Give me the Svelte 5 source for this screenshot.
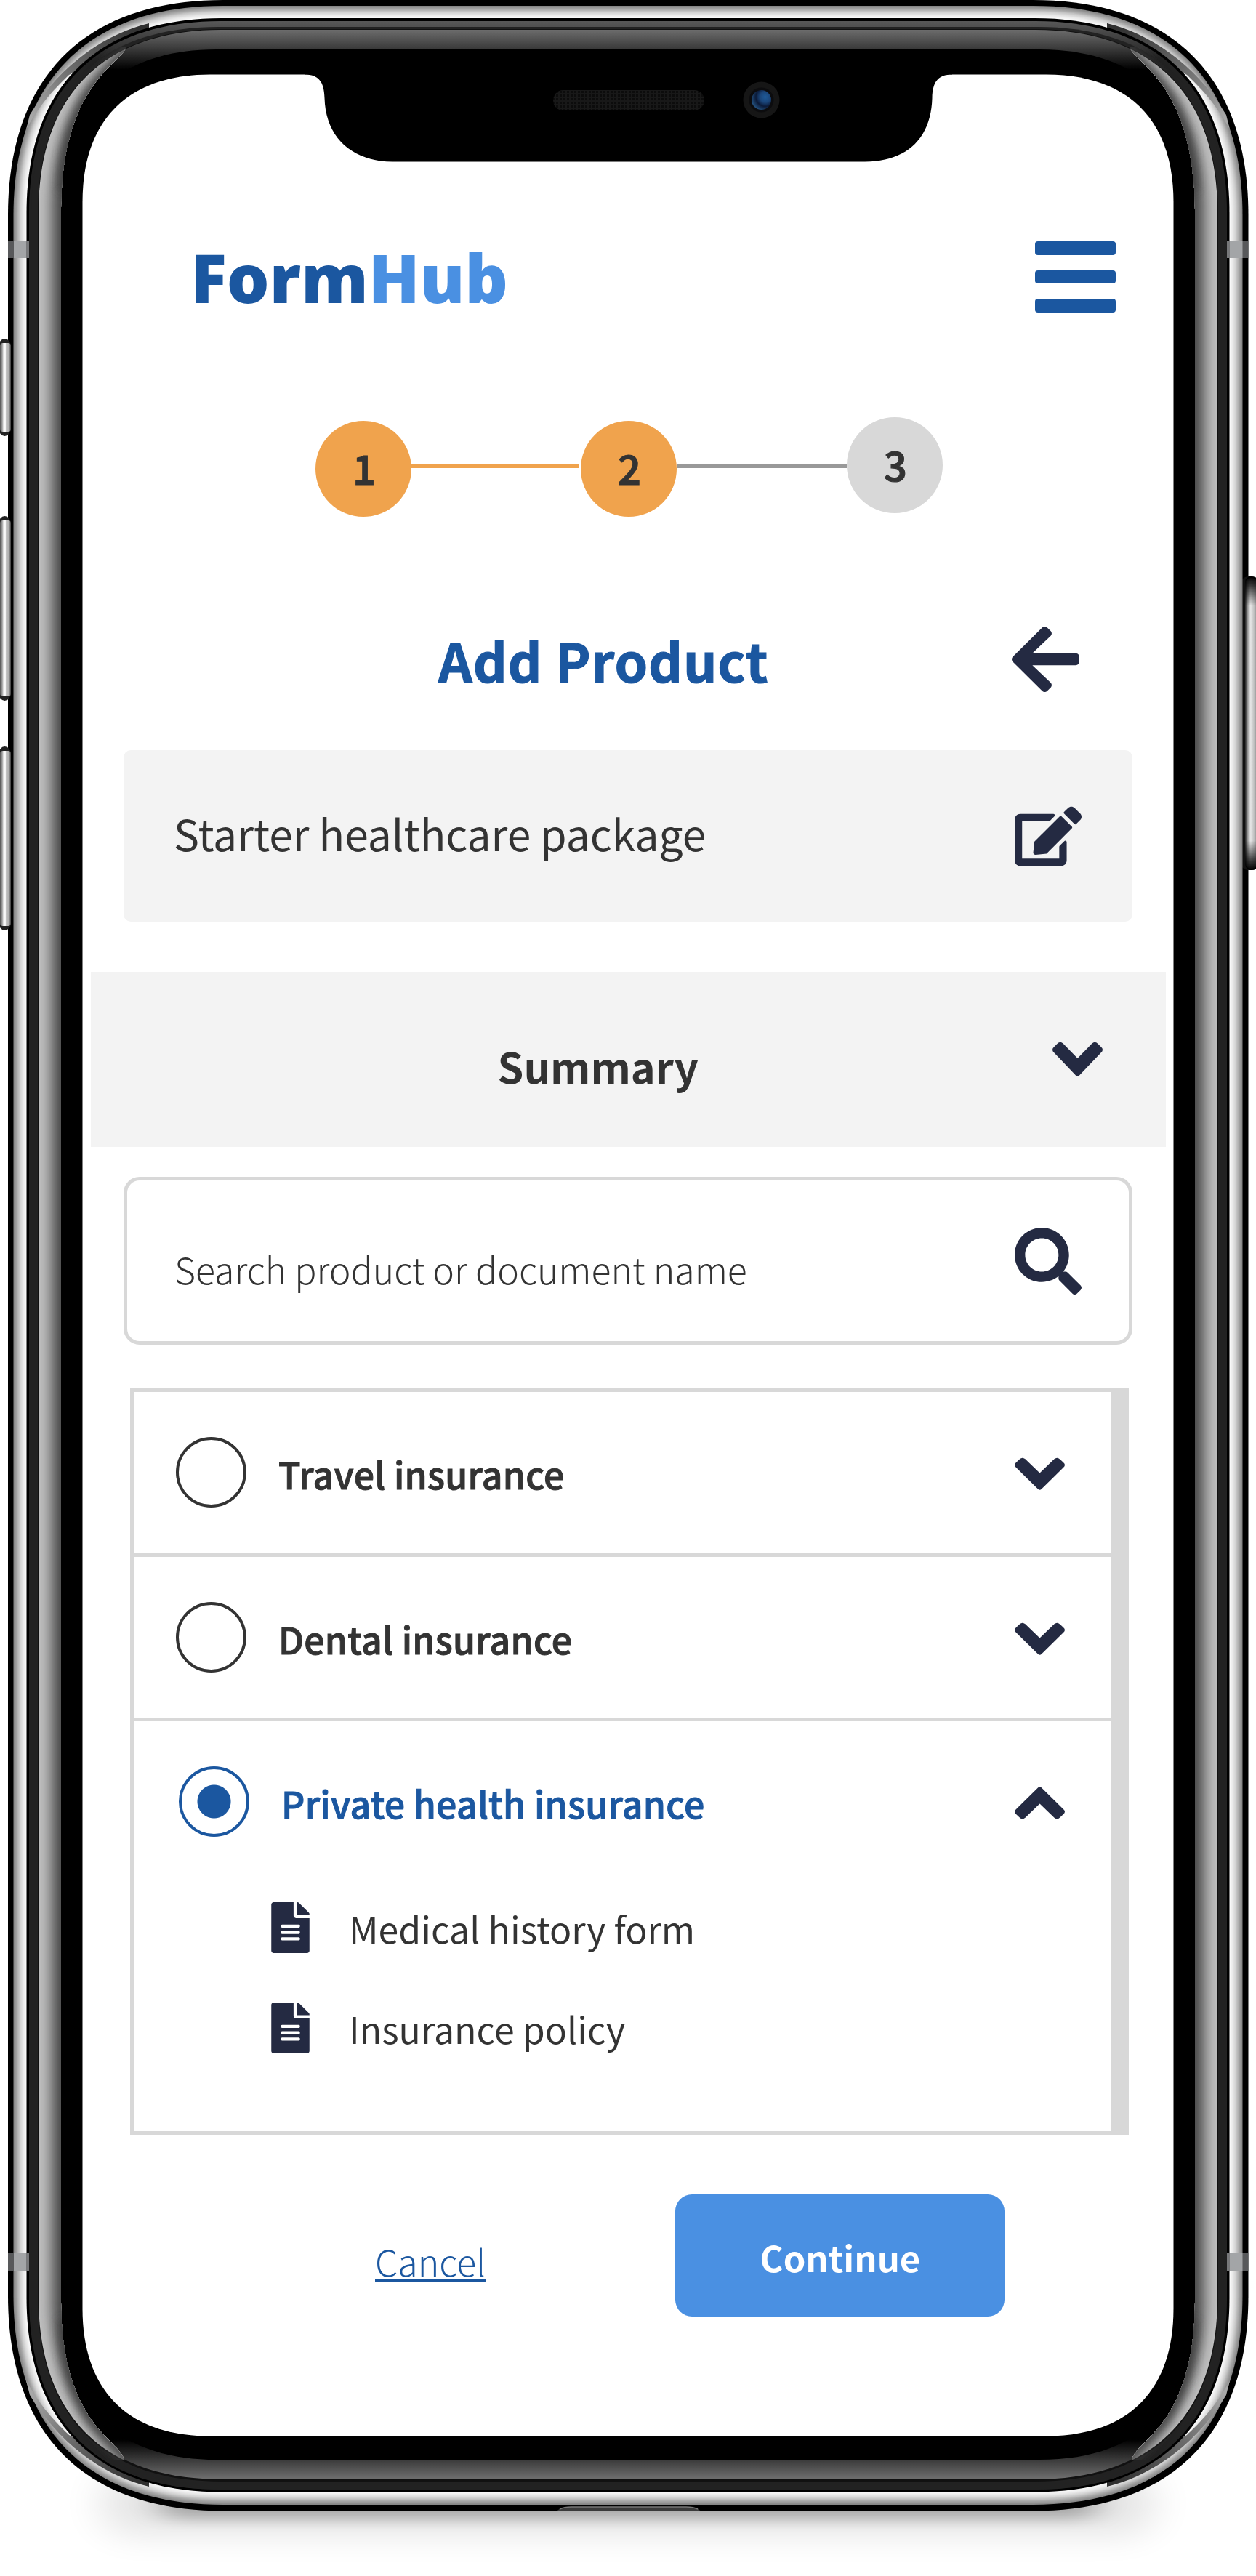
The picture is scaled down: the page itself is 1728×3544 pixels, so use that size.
<script>
  // Builds a continuous-corner rounded rectangle for the device shell.
  function shell(l, t, r, b, R) {
    const e = R * 1.13;
    const k = R * 0.404;
    return `M${l},${t + e} C${l},${t + k} ${l + k},${t} ${l + e},${t} H${r - e} C${r - k},${t} ${r},${t + k} ${r},${t + e} V${b - e} C${r},${b - k} ${r - k},${b} ${r - e},${b} H${l + e} C${l + k},${b} ${l},${b - k} ${l},${b - e} Z`;
  }
  const mix = (stops, p) => {
    const s = p * (stops.length - 1);
    const i = Math.min(Math.floor(s), stops.length - 2);
    const v = Math.round(stops[i] + (stops[i + 1] - stops[i]) * (s - i));
    return `rgb(${v},${v},${v})`;
  };
  const rim = Array.from({ length: 18 }, (_, i) => ({
    d: shell(18.5 + i, 8 + i * 0.95, 1709.5 - i, 3446 - i, 255 - i),
    c: mix([134, 165, 205, 232, 250], i / 17)
  }));
  const glow = Array.from({ length: 30 }, (_, i) => ({
    d: shell(53 + i, 41 + i, 1675 - i, 3412 - i, 222 - i),
    c: mix([190, 178, 150, 112, 82], i / 29)
  }));
  // Corner reflections are drawn once and mirrored into the four corners.
  const corners = [
    'matrix(1 0 0 1 0 0)',
    'matrix(-1 0 0 1 1728 0)',
    'matrix(1 0 0 -1 0 3453)',
    'matrix(-1 0 0 -1 1728 3453)'
  ];

  const steps = [
    { n: 1, state: 'done' },
    { n: 2, state: 'done' },
    { n: 3, state: 'todo' }
  ];
  const products = [
    { name: 'Travel insurance', docs: [] },
    { name: 'Dental insurance', docs: [] },
    { name: 'Private health insurance', docs: ['Medical history form', 'Insurance policy'] }
  ];
  let selected = 'Private health insurance';
</script>

{#snippet chevron(up)}
  <svg class="chevron" class:up viewBox="0 0 69 48" preserveAspectRatio="none"><path d="M6 3.500 Q10 -1.500 14.500 2.500 L34.500 23 L54.500 2.500 Q59 -1.500 63 3.500 L67 7.500 Q71 11 67 15 L37 46.500 Q34.500 49 32 46.500 L2 15 Q-2 11 2 7.500 Z" /></svg>
{/snippet}

<div class="phone">
  <svg class="device" viewBox="0 0 1728 3544" aria-hidden="true">
    <defs>
      <linearGradient id="edge" gradientUnits="userSpaceOnUse" x1="0" y1="29" x2="0" y2="80">
        <stop offset="0" stop-color="#585858" /><stop offset="1" stop-color="#222" />
      </linearGradient>
      <linearGradient id="glass" gradientUnits="userSpaceOnUse" x1="0" y1="41" x2="0" y2="3411">
        <stop offset="0" stop-color="#6c6c6c" /><stop offset=".008" stop-color="#383838" /><stop offset=".0162" stop-color="#000" />
        <stop offset=".9838" stop-color="#000" /><stop offset=".992" stop-color="#3a3a3a" /><stop offset="1" stop-color="#707070" />
      </linearGradient>
      <linearGradient id="button" x1="0" x2="1">
        <stop offset="0" stop-color="#555" /><stop offset=".2" stop-color="#999" /><stop offset=".35" stop-color="#fff" /><stop offset=".5" stop-color="#f4f4f4" /><stop offset=".56" stop-color="#c4c4c4" /><stop offset=".85" stop-color="#aaa" /><stop offset="1" stop-color="#333" />
      </linearGradient>
      <linearGradient id="power" x1="0" x2="1">
        <stop offset="0" stop-color="#222" /><stop offset=".25" stop-color="#aaa" /><stop offset=".45" stop-color="#e6e6e6" /><stop offset=".7" stop-color="#c4c4c4" /><stop offset="1" stop-color="#888" />
      </linearGradient>
      <linearGradient id="powerEnds" x1="0" x2="0" y1="0" y2="1">
        <stop offset="0" stop-color="#000" /><stop offset=".03" stop-color="#000" stop-opacity=".75" /><stop offset=".1" stop-color="#000" stop-opacity="0" /><stop offset=".9" stop-color="#000" stop-opacity="0" /><stop offset=".97" stop-color="#000" stop-opacity=".75" /><stop offset="1" stop-color="#000" />
      </linearGradient>
      <linearGradient id="streak" gradientUnits="userSpaceOnUse" x1="42" y1="160" x2="190" y2="38">
        <stop offset="0" stop-color="#a8a8a8" /><stop offset=".45" stop-color="#6a6a6a" /><stop offset="1" stop-color="#303030" />
      </linearGradient>
      <radialGradient id="lens" cx=".7" cy=".35" r=".8">
        <stop offset="0" stop-color="#1f5a98" /><stop offset=".35" stop-color="#1a4478" /><stop offset=".6" stop-color="#0b1a38" /><stop offset="1" stop-color="#2a5f90" />
      </radialGradient>
      <pattern id="mesh" width="5" height="5" patternUnits="userSpaceOnUse">
        <rect width="5" height="5" fill="#181818" /><rect width="3" height="3" fill="#0c0c0c" />
      </pattern>
      <clipPath id="sides">
        <path d="M174,64 C172,84 84,112 84,290 V3165 C84,3338 168,3358 171,3385 L40,3385 V64 Z M1554,64 C1556,84 1644,112 1644,290 V3165 C1644,3338 1560,3358 1557,3385 L1690,3385 V64 Z" />
      </clipPath>
      <filter id="shade" x="-50%" y="-50%" width="200%" height="200%"><feGaussianBlur stdDeviation="7" /></filter>
      <filter id="soft" x="-20%" y="-200%" width="140%" height="500%"><feGaussianBlur stdDeviation="28 22" /></filter>
      <filter id="tight" x="-20%" y="-200%" width="140%" height="500%"><feGaussianBlur stdDeviation="22 9" /></filter>
    </defs>

    <rect x="140" y="3400" width="1448" height="88" rx="40" fill="#000" opacity=".1" filter="url(#soft)" />
    <rect x="220" y="3430" width="1288" height="36" rx="18" fill="#000" opacity=".26" filter="url(#tight)" />

    <path d={shell(11, 0, 1717.5, 3454.5, 262)} fill="#000" />
    {#each [[466, 134], [710, 254], [1027, 253]] as [y, h]}
      <rect x="-2" {y} width="17" height={h} rx="11" fill="#222" />
      <rect x="0" y={y + 6} width="15" height={h - 12} rx="4" fill="url(#button)" />
    {/each}
    <rect x="1706" y="793" width="28" height="404" rx="12" fill="#111" />
    <rect x="1713" y="795" width="17" height="400" rx="8" fill="url(#power)" />
    <rect x="1713" y="793" width="17" height="404" rx="8" fill="url(#powerEnds)" />

    {#each rim as r}<path d={r.d} fill={r.c} />{/each}
    {#each corners as m}
      <path transform={m} d="M205,32 C150,45 85,85 41,158 L36,178 C60,135 80,118 95,103 L205,44 Z" fill="url(#streak)" />
    {/each}
    <path d={shell(36.500, 25, 1691.500, 3428.500, 237)} fill="#000" />
    <path d={shell(40, 29, 1688, 3425, 233)} fill="url(#edge)" />
    <path d={shell(43, 37, 1685, 3425, 228)} fill="#222" />
    <path d={shell(52, 40, 1676, 3414, 223)} fill="#111" />
    <path d={shell(53, 41, 1675, 3411, 222)} fill="url(#glass)" />
    <path d={shell(83, 68, 1645, 3384, 190)} fill="#000" />
    <g clip-path="url(#sides)">
      {#each glow as g}<path d={g.d} fill={g.c} />{/each}
      <path d={shell(83, 71, 1645, 3382, 192)} fill="#525252" />
      {#each corners as m}
        <path transform={m} d="M182,60 C176,88 92,115 92,262" fill="none" stroke="#404040" stroke-width="22" opacity=".9" filter="url(#shade)" />
      {/each}
    </g>
    {#each [[331, 24], [3100, 24]] as [y, h]}
      <rect x="11" {y} width="29" height={h} fill="#a3a5a7" />
      <rect x="11" {y} width="8" height={h} fill="#58595b" />
      <rect x="36" {y} width="4" height={h} fill="#77787a" />
      <rect x="1688" {y} width="29.500" height={h} fill="#a3a5a7" />
      <rect x="1709.500" {y} width="8" height={h} fill="#58595b" />
      <rect x="1688" {y} width="4" height={h} fill="#77787a" />
    {/each}
    <path d="M766,3454.500 Q772,3449 786,3449 H944 Q958,3449 964,3454.500 Z" fill="#3a3a3a" />
    <path d="M770,3452 Q776,3449 786,3449 H944 Q954,3449 960,3452" fill="none" stroke="#777" stroke-width="1.500" />

    <path d={shell(113.500, 102.500, 1614.500, 3351.500, 155)} fill="#fff" />
    <path d="M419,101 V102.500 C438,102.500 446,112 446.500,135 C448,190 485,222 540,222.500 H1190 C1248,222 1281,190 1282.500,135 C1283,112 1291,102.500 1310,102.500 V101 Z" fill="#000" />
    <rect x="761" y="124" width="208" height="28" rx="14" fill="url(#mesh)" />
    <circle cx="1047.500" cy="137.500" r="25" fill="#161616" />
    <circle cx="1047.500" cy="137.500" r="17" fill="#0c0c0e" />
    <circle cx="1047.500" cy="137.500" r="13.500" fill="url(#lens)" />
  </svg>

  <main class="screen">
    <header>
      <div class="logo">Form<span>Hub</span></div>
      <div class="menu"><i></i><i></i><i></i></div>
    </header>

    <div class="steps">
      {#each steps as s, i}
        {#if i}<div class="line" class:active={i === 1}></div>{/if}
        <div class="step {s.state}">{s.n}</div>
      {/each}
    </div>

    <div class="title">
      <h1>Add Product</h1>
      <svg class="back" viewBox="0 38 448 436" preserveAspectRatio="none"><path d="M257.500 445.100l-22.200 22.200c-9.400 9.400-24.600 9.400-33.900 0L7 273c-9.400-9.400-9.400-24.600 0-33.900L201.400 44.700c9.400-9.400 24.600-9.400 33.900 0l22.200 22.200c9.500 9.500 9.300 25-.4 34.300L136.600 216H424c13.300 0 24 10.700 24 24v32c0 13.300-10.700 24-24 24H136.600l120.500 114.800c9.800 9.300 10 24.800.4 34.300z" /></svg>
    </div>

    <div class="package">
      <span>Starter healthcare package</span>
      <svg class="icon edit" viewBox="0 0 576 512"><path d="M402.600 83.200l90.200 90.200c3.800 3.800 3.800 10 0 13.800L274.400 405.600l-92.800 10.300c-12.400 1.400-22.900-9.100-21.500-21.500l10.300-92.800L388.800 83.200c3.800-3.800 10-3.800 13.800 0zm162-22.900l-48.800-48.800c-15.200-15.200-39.900-15.200-55.200 0l-35.400 35.400c-3.800 3.800-3.800 10 0 13.800l90.200 90.200c3.800 3.800 10 3.800 13.800 0l35.400-35.400c15.200-15.300 15.200-40 0-55.200zM384 346.200V448H64V128h229.800c3.200 0 6.200-1.300 8.500-3.500l40-40c7.600-7.600 2.200-20.500-8.500-20.500H48C21.500 64 0 85.500 0 112v352c0 26.500 21.500 48 48 48h352c26.500 0 48-21.500 48-48V306.200c0-10.700-12.900-16-20.500-8.500l-40 40c-2.200 2.300-3.500 5.300-3.500 8.500z" /></svg>
    </div>

    <div class="summary">
      <h2>Summary</h2>
      {@render chevron(false)}
    </div>

    <div class="search">
      <span>Search product or document name</span>
      <svg class="icon" viewBox="0 0 512 512"><path d="M505 442.700L405.300 343c-4.500-4.500-10.600-7-17-7H372c27.600-35.300 44-79.700 44-128C416 93.100 322.900 0 208 0S0 93.100 0 208s93.100 208 208 208c48.300 0 92.700-16.400 128-44v16.300c0 6.400 2.500 12.500 7 17l99.700 99.700c9.400 9.400 24.600 9.400 33.900 0l28.300-28.300c9.400-9.400 9.400-24.600.1-34zM208 336c-70.700 0-128-57.200-128-128 0-70.700 57.200-128 128-128 70.700 0 128 57.200 128 128 0 70.700-57.200 128-128 128z" /></svg>
    </div>

    <div class="list">
      {#each products as p}
        <section>
          <div class="row" class:selected={p.name === selected}>
            <span class="radio"></span>
            <span class="name">{p.name}</span>
            {@render chevron(p.name === selected)}
          </div>
          {#if p.docs.length}
            <ul>
              {#each p.docs as d}
                <li>
                  <svg viewBox="0 0 384 512"><path d="M224 136V0H24C10.700 0 0 10.700 0 24v464c0 13.300 10.700 24 24 24h336c13.300 0 24-10.700 24-24V160H248c-13.200 0-24-10.800-24-24zm64 236c0 6.600-5.400 12-12 12H108c-6.600 0-12-5.400-12-12v-8c0-6.600 5.400-12 12-12h168c6.600 0 12 5.400 12 12v8zm0-64c0 6.600-5.400 12-12 12H108c-6.600 0-12-5.400-12-12v-8c0-6.600 5.400-12 12-12h168c6.600 0 12 5.400 12 12v8zm0-72v8c0 6.600-5.400 12-12 12H108c-6.600 0-12-5.400-12-12v-8c0-6.600 5.400-12 12-12h168c6.600 0 12 5.400 12 12zm96-114.100v6.100H256V0h6.100c6.400 0 12.500 2.500 17 7l97.900 98c4.500 4.500 7 10.600 7 16.900z" /></svg>
                  <span>{d}</span>
                </li>
              {/each}
            </ul>
          {/if}
        </section>
      {/each}
    </div>

    <div class="actions">
      <span class="cancel">Cancel</span>
      <button>Continue</button>
    </div>
  </main>
</div>

<style>
  :global(body) { margin: 0; background: #fff; }
  .phone { position: relative; width: 1728px; height: 3544px; overflow: hidden; color: #333; font-family: "Source Sans Pro", "Noto Sans CJK SC", "Noto Sans", sans-serif; box-sizing: border-box; padding: 320px 114px 0; }
  .device { position: absolute; left: 0; top: 0; width: 1728px; height: 3544px; }
  .screen { position: relative; width: 1500px; white-space: nowrap; }
  .screen svg { fill: #242a42; display: block; flex: none; }
  h1, h2, ul { margin: 0; padding: 0; }

  header { display: flex; align-items: center; justify-content: space-between; height: 122px; padding: 0 79px 0 148px; }
  .logo { font: 800 92.500px/122px "Open Sans", sans-serif; color: #1b57a0; }
  .logo span { color: #4a90e2; }
  .menu { display: flex; flex-direction: column; gap: 21px; width: 111px; }
  .menu i { height: 18.500px; border-radius: 4px; background: #1b57a0; }

  .steps { display: flex; align-items: flex-start; margin-top: 132px; padding-left: 320px; height: 137px; }
  .step { width: 132px; height: 132px; border-radius: 50%; text-align: center; font-size: 56px; font-weight: 500; -webkit-text-stroke: 1.200px currentColor; line-height: 127px; text-indent: 2px; background: #d8d8d8; }
  .step.done { margin-top: 5px; background: #f0a34d; }
  .line { width: 234px; height: 5px; margin-top: 65px; background: #999; }
  .line.active { width: 231px; margin-right: 2px; background: #f0a34d; }

  .title { display: flex; align-items: center; justify-content: space-between; height: 90px; margin-top: 151px; padding: 0 129px 0 489px; }
  h1 { font-size: 73px; line-height: 90px; letter-spacing: 0.9px; color: #1b57a0; font-weight: 700; -webkit-text-stroke: 1.200px currentColor; }
  .back { width: 93px; height: 90px; }

  .package, .search { display: flex; align-items: center; justify-content: space-between; box-sizing: border-box; width: 1388px; margin-left: 56px; }
  .package { height: 236px; margin-top: 80px; padding: 0 70px 0 69px; background: #f3f3f3; border-radius: 10px; font-size: 58.700px; }
  .package span { margin-top: -9px; }
  .icon { width: 92px; height: 92px; }
  .icon.edit { height: 83px; }

  .summary { display: flex; align-items: center; justify-content: space-between; height: 241px; margin: 69px 10.500px 0; padding: 0 87px 0 560px; background: #f3f3f3; }
  h2 { font-size: 57.500px; font-weight: 700; padding-top: 16px; }
  .chevron { width: 69px; height: 48px; margin-top: -2px; }
  .chevron.up { transform: scaleY(-1); }

  .search { height: 231px; margin-top: 41px; padding: 0 65px 0 65px; border: 5px solid #d8d8d8; border-radius: 22px; font-size: 50px; font-weight: 300; }
  .search span { padding-top: 21px; }

  .list { box-sizing: border-box; width: 1374px; height: 1027px; margin: 60px 0 0 65px; border: 5px solid #d8d8d8; border-right-width: 24px; }
  section + section { border-top: 5px solid #d8d8d8; }
  .row { display: flex; align-items: center; height: 221.500px; padding: 0 64px 0 58px; font-size: 50px; }
  .row .chevron { height: 45px; margin-left: auto; margin-top: 4px; }
  .radio { box-sizing: border-box; width: 97px; height: 97px; border: 4.500px solid #333; border-radius: 50%; margin-right: 44px; }
  .name { font-weight: 500; letter-spacing: 0.250px; -webkit-text-stroke: 1px currentColor; padding-top: 3px; }
  .selected { color: #1b57a0; padding-left: 62px; }
  .selected .radio { border-color: #1b57a0; background: radial-gradient(circle, #1b57a0 22.500px, transparent 23.500px); }
  ul { list-style: none; padding: 28px 0 0 189px; }
  li { display: flex; align-items: center; gap: 54px; height: 69px; margin-bottom: 69px; font-size: 50px; }
  li svg { width: 53px; height: 70px; }

  .actions { display: flex; align-items: center; height: 168px; margin-top: 82px; padding-left: 402px; }
  .cancel { font-size: 50px; font-weight: 300; line-height: 60px; margin-top: 14px; color: #1b57a0; text-decoration: underline; text-decoration-thickness: 4px; text-underline-offset: 4px; text-decoration-skip-ink: none; }
  button { width: 453px; height: 168px; margin-left: 261px; padding: 4px 0 0; border: 0; border-radius: 23px; background: #4a90e2; color: #fff; font: 700 49px/164px "Noto Sans CJK SC", sans-serif; }
</style>
